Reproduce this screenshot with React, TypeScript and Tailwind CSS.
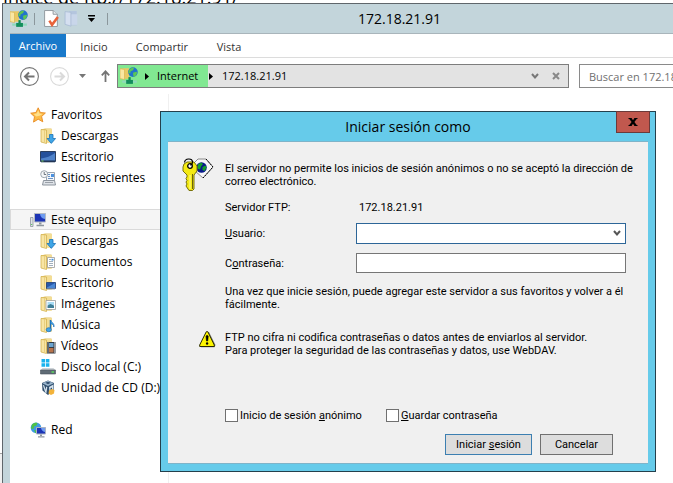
import type { ReactNode } from "react";

function Svg({ children, size = 16 }: { children: ReactNode; size?: number }) {
  return (
    <svg width={size} height={size} viewBox="0 0 16 16" className="shrink-0" aria-hidden="true">
      {children}
    </svg>
  );
}

function Folder({ children }: { children?: ReactNode }) {
  return (
    <Svg>
      <path d="M1 1.500 5 .5h6.500v14H5l-4-1z" fill="#e3c468" />
      <path d="M5.500 1H12v13.500H5.500z" fill="#f3dd94" />
      <path d="M1 1.500 6.500 2v13.500l-5.500-1.500z" fill="#f8e5a4" stroke="#d4b250" strokeWidth=".8" />
      <path d="M4.500 2v13" stroke="#e8cf80" />
      {children}
    </Svg>
  );
}

function DownloadsIcon() {
  return (
    <Folder>
      <path d="M9.500 6.500h3.500v4h2.600L11.300 15.400 7 10.500h2.500z" fill="#3fa5e6" stroke="#1c74b8" strokeWidth=".8" />
    </Folder>
  );
}

function DocumentsIcon() {
  return (
    <Folder>
      <path d="M7.500 3.500h7v10h-7z" fill="#fff" stroke="#9a9a9a" strokeWidth=".8" />
      <path d="M9 5.500h2M9 7.500h4M9 9.500h4M9 11.500h4" stroke="#8a9cad" strokeWidth=".8" />
      <path d="M11.500 4.800h2v1.700h-2z" fill="#3c8ede" />
    </Folder>
  );
}

function FolderDesktopIcon() {
  return (
    <Folder>
      <path d="M6.500 7.500h9v6h-9z" fill="#2759ab" stroke="#1a3c78" strokeWidth=".8" />
      <path d="M7 12.500 15 8v5H7z" fill="#4a87d4" />
      <path d="M7 14h8" stroke="#98a8b8" />
    </Folder>
  );
}

function PicturesIcon() {
  return (
    <Folder>
      <path d="M6 4.500h9.500v9H6z" fill="#fff" stroke="#9a9a9a" strokeWidth=".8" />
      <path d="M7.500 6h6.500v3H7.500z" fill="#a9dcf5" />
      <path d="m7.500 12 0-2.500 3-1.500 3.500 1.500V12z" fill="#3f7f98" />
    </Folder>
  );
}

function MusicIcon() {
  return (
    <Folder>
      <path d="M10.500 3v9" stroke="#1b6fb8" strokeWidth="1.500" />
      <path d="M10.500 3c.8 2.500 4.500 3.500 3.300 7 0-2.300-1.500-3-3.300-3.500z" fill="#42a4e8" stroke="#1b6fb8" strokeWidth=".7" />
      <ellipse cx="8.800" cy="12.700" rx="2.600" ry="2" fill="#42a4e8" stroke="#1b6fb8" strokeWidth=".7" />
    </Folder>
  );
}

function VideosIcon() {
  return (
    <Folder>
      <path d="M7 4h8.500v11.500H7z" fill="#333b44" />
      <path d="M9 5h4.500v4H9z" fill="#6aa4d0" />
      <path d="M9 10h4.500v4.500H9z" fill="#b7734b" />
      <path d="M8 4.500V15M14.500 4.500V15" stroke="#f2f2f2" strokeDasharray="1 1" />
    </Folder>
  );
}

function StarIcon() {
  return (
    <Svg>
      <path d="m8.200.8 2.100 4.700 5.100.5-3.800 3.500 1.200 5.300-4.600-2.600-4.700 2.900 1-5.400L.7 6.200l5.200-.7z" fill="#fdbb46" stroke="#e88a22" strokeWidth=".9" />
      <path d="m8.200 3.300 1.300 3.200 3.200.4-3.200 1.800-3.300.8L3.800 7l2.900-.5z" fill="#ffe08b" />
    </Svg>
  );
}

function DesktopIcon() {
  return (
    <Svg>
      <path d="M.5 2.500h15v10H.5z" fill="#24509b" stroke="#2c3f5e" />
      <path d="M1 9.500C6 9 11 7 15 4v8H1z" fill="#4f82c9" />
      <path d="M1 12h14" stroke="#1b2d4a" />
      <path d="M1.500 12h2" stroke="#7bd35a" />
      <path d="M1 13.500h14" stroke="#b9c2cc" />
    </Svg>
  );
}

function RecentIcon() {
  return (
    <Svg>
      <path d="M6.500 2.500h8v8h-8z" fill="#f3f6fa" stroke="#9aa4b0" />
      <path d="M8 4.500h2M8 6.500h2M8 8.500h5" stroke="#6b93c4" />
      <path d="M11 4h3v3h-3z" fill="#4b91df" />
      <path d="m3.500 10.500 11 0 1 4.500h-13z" fill="#dfe3e8" stroke="#8d959e" />
      <path d="M5 12.500h8" stroke="#9aa0a8" />
      <circle cx="4.200" cy="4.200" r="3.500" fill="#f5f7f9" stroke="#9ea7b0" />
      <path d="M4.200 2v2.500h2" fill="none" stroke="#5c646e" strokeWidth=".9" />
    </Svg>
  );
}

function ComputerIcon() {
  return (
    <Svg>
      <path d="M.5 5.500h2.500v9H.5z" fill="#dfe3e7" stroke="#8e969e" strokeWidth=".8" />
      <path d="M1.200 12.500h1" stroke="#4bc24b" />
      <path d="M4.500 1.500h11v8.500h-11z" fill="#1c34b5" stroke="#b4bac4" />
      <path d="M10 2h5v5c-3-.5-4.500-2-5-5z" fill="#6f9cf0" />
      <path d="M9 10.500h2.500v2H9z" fill="#8f979f" />
      <path d="M6.500 13.500h7.500" stroke="#8f979f" strokeWidth="1.500" />
    </Svg>
  );
}

function DiskIcon() {
  return (
    <Svg>
      <path d="M1.500 0h3.500v3.500H1.500zM5.800 0h3.600v3.500H5.800zM1.500 4.300h3.500v3.500H1.500zM5.800 4.300h3.600v3.500H5.800z" fill="#19b3ee" />
      <path d="m2.500 9 11 0 2 2.500H.5z" fill="#cdd3d8" />
      <path d="M.5 11h15v4H.5z" fill="#5f6b75" stroke="#48525b" strokeWidth=".6" />
      <path d="M11.500 13h2.500" stroke="#5be05b" strokeWidth="1.400" />
    </Svg>
  );
}

function CdIcon() {
  return (
    <Svg>
      <path d="m8 .5 6 2.500-.5 7.500L8 15l-5.500-4.500L2 3z" fill="#31506f" />
      <path d="m8 .8 5.600 2.400L8 6 2.400 3.200z" fill="#9cb7cf" />
      <path d="m5.300 2.800 2.700-1 2.700 1L8 4.300z" fill="#2f4d6c" />
      <path d="m2.700 4.800 1.500.8 1.500 4.200.4-3.200 1.200.6-.9 6-1.200-.8zM9 7l4.500-2.500-.4 5L9.500 12z" fill="#d4e1ec" />
      <path d="m10.500 8.200 1.500-.8v2l-1.500.9z" fill="#31506f" />
      <path d="m9 10.500 3-1.500 2.500 1-.5 3.500-3 1.500-2.500-1.500z" fill="#f3b33a" />
    </Svg>
  );
}

function NetworkIcon() {
  return (
    <Svg>
      <circle cx="6" cy="5.800" r="5.300" fill="#3f9be3" />
      <path d="M2 2.500c2-2 4-2.200 5.500-1.500L6.500 3.500 4 4.500 3.500 7 1 6.500zM4 8l3 .5.500 2.200-2 .6z" fill="#4fc245" />
      <path d="M6.500 5.500h9v6.500h-9z" fill="#1c34b5" stroke="#aab3c2" />
      <path d="M11 6h4v4c-2.500-.5-3.500-2-4-4z" fill="#6f9cf0" />
      <path d="M10 12.500h2V14h-2zM8 14.300h6.500v1.200H8z" fill="#8f979f" />
    </Svg>
  );
}

function FtpIcon() {
  return (
    <Svg size={18}>
      <path d="M0 1.500 4 1h4v9.500H0z" fill="#e9c864" />
      <path d="m0 1.500 4 .7v9L0 10.300z" fill="#fae7a2" stroke="#d6b452" strokeWidth=".6" />
      <circle cx="11.500" cy="4.500" r="4.300" fill="#2273cc" />
      <path d="M8.200 2.500c1.500-1.800 3-1.900 4.300-1.600l-1 2-2 .8-.5 2-1.800-.7zM11.500 5l3-.8.8 1-1.600 3-1.700.4z" fill="#5cc653" />
      <path d="M8.500 9v3" stroke="#118a54" strokeWidth="2" />
      <path d="M2 13h13" stroke="#8fd9bb" strokeWidth="2" />
      <path d="M5.500 11.500h6v3.500h-6z" fill="#138e5c" />
    </Svg>
  );
}

function PropertiesIcon() {
  return (
    <Svg size={17}>
      <path d="M1.500.5h8L13.500 4v11.500h-12z" fill="#fff" stroke="#90979d" strokeWidth=".9" />
      <path d="M9.500.5V4h4" fill="#e7eaed" stroke="#90979d" strokeWidth=".9" />
      <path d="m6 10 2.500 4L14 6.500" fill="none" stroke="#e8623a" strokeWidth="2.400" />
    </Svg>
  );
}

function NewFolderIcon() {
  return (
    <Svg size={17}>
      <path d="M5 1h7v13.500H5z" fill="#b4c5de" />
      <path d="m1 1.500 5.500.7v13L1 13.500z" fill="#d5dff0" stroke="#a5b7d3" strokeWidth=".7" />
      <path d="M7 4h5.500v10H7z" fill="#c9d6ea" />
    </Svg>
  );
}

function KeyIcon() {
  return (
    <svg width="32" height="34" viewBox="0 0 32 34" aria-hidden="true">
      <path d="M12 5 16 1h8l7 8-10 11-8-7z" fill="#f8f8f8" stroke="#8a8a8a" />
      <path d="m24 1 7 8-10 11" fill="none" stroke="#000" strokeDasharray="2 1" />
      <circle cx="19.500" cy="9.500" r="5.300" fill="#0a1a8c" />
      <path d="M16 6.500 19 4.500l2 1.500-2 2.500-1 3-2.500-1zM20.500 9l3-1.500 1 2-2 3.500-2-1z" fill="#16a02c" />
      <path d="M2 6 1 9v4l4 4v2L4 20.500l1 2L4 24l1 2-1 2 3 4.500h3.500L12 31V17l3-4V8l-3-4H5z" fill="#f4ea12" stroke="#77700c" />
      <path d="M8 17v14" stroke="#fffb9a" />
      <path d="M10.500 16v15" stroke="#6b650a" />
      <circle cx="8" cy="8" r="2.300" fill="#fff" stroke="#000" strokeWidth="1.300" />
      <path d="M2.500 4.500C3 0 10 0 10.500 3.500c0 2-1 3.500-2.500 3.500" fill="none" stroke="#000" strokeWidth="1.200" />
    </svg>
  );
}

function WarningIcon() {
  return (
    <svg width="17" height="17" viewBox="0 0 17 17" aria-label="Advertencia" role="img">
      <path d="M8 1h2l6.500 13-1 2.300H2z" fill="#7d7d7d" />
      <path d="M7.300.7h1.500L15.300 14v1.500H.7V14z" fill="#fdf500" stroke="#2a2a00" />
      <path d="M7 5.500c0-1.500 2.200-1.500 2.200 0L8.700 10H7.500z" fill="#000" stroke="#000" strokeWidth=".6" />
      <circle cx="8.100" cy="12.500" r="1.200" fill="#000" />
    </svg>
  );
}

function Chevron() {
  return (
    <svg width="8" height="7" viewBox="0 0 8 7" aria-hidden="true">
      <path d="m1 1 3 3.500L7 1" fill="none" stroke="currentColor" strokeWidth="2" />
    </svg>
  );
}

function Triangle() {
  return (
    <svg width="4" height="7" viewBox="0 0 4 7" className="shrink-0" aria-hidden="true">
      <path d="M0 0v7l4-3.500z" fill="#000" />
    </svg>
  );
}

function Arrow({ d, color }: { d: string; color: string }) {
  return (
    <svg width="19" height="19" viewBox="0 0 19 19" className={color} aria-hidden="true">
      <circle cx="9.500" cy="9.500" r="8.900" fill="none" stroke="currentColor" strokeWidth="1.100" />
      <path d={d} fill="none" stroke="currentColor" strokeWidth="2" />
    </svg>
  );
}

const BACK = "M14.500 9.500H5.500M9 5.500l-4 4 4 4";

function NavItem({ icon, label, root, active }: { icon: ReactNode; label: string; root?: boolean; active?: boolean }) {
  return (
    <li
      className={`flex h-[21px] items-center gap-1 whitespace-nowrap ${root ? "pl-[19px]" : "pl-[29px]"} ${
        active ? "border border-r-0 border-[#dadada] bg-[#f5f5f5]" : "border border-transparent"
      }`}
    >
      {icon}
      <a href="#" className="px-px">{label}</a>
    </li>
  );
}

function Explorer() {
  return (
    <main className="flex grow flex-col border-t border-l border-[#5f666b] bg-[#c3d5db] pl-[7px]">
      <header className="flex h-[29px] items-center">
        <div className="flex w-[116px] shrink-0 items-center">
          <FtpIcon />
          <span className="ml-1.5 mr-2 h-3 w-px bg-[#8b979c]" />
          <PropertiesIcon />
          <span className="w-1" />
          <NewFolderIcon />
          <button aria-label="Personalizar" className="mr-3 ml-[7px]">
            <svg width="7" height="7" viewBox="0 0 7 7">
              <path d="M0 0h7v1.500H0zM0 3h7L3.500 7z" fill="#000" />
            </svg>
          </button>
          <span className="h-3 w-px bg-[#8b979c]" />
        </div>
        <h1 className="grow text-center text-[14px]">172.18.21.91</h1>
      </header>
      <div className="flex grow flex-col bg-white">
        <nav className="flex h-[25px] items-stretch border-y border-t-[#a9b5bb] border-b-[#dcdcdc] text-[11px] text-[#333]">
          <button className="w-14 bg-[#1979ca] pt-px text-white">Archivo</button>
          <button className="w-14 pt-1">Inicio</button>
          <button className="w-20 pt-1">Compartir</button>
          <button className="w-[54px] pt-1">Vista</button>
        </nav>
        <div className="flex items-center pt-[6px] pl-[10px]">
          <button aria-label="Atrás"><Arrow d={BACK} color="text-[#747474]" /></button>
          <button aria-label="Adelante" className="ml-[11px]"><Arrow d="M4.500 9.500h9M10 5.500l4 4-4 4" color="text-[#dadada]" /></button>
          <button aria-label="Recientes" className="ml-[10px]">
            <svg width="7" height="4" viewBox="0 0 7 4"><path d="M0 0h7L3.500 4z" fill="#777" /></svg>
          </button>
          <button aria-label="Subir" className="ml-[15px]">
            <svg width="9" height="12" viewBox="0 0 9 12"><path d="M4.500 12V1.500M.8 5.300l3.700-4 3.700 4" fill="none" stroke="#747474" strokeWidth="1.800" /></svg>
          </button>
          <div className="ml-[7px] flex h-6 grow items-center border border-[#7d7d7d] bg-[#e3e3e3] text-[12px]">
            <div className="flex h-full w-[90px] items-center gap-[7px] bg-[#81e892] pl-0.5">
              <FtpIcon />
              <Triangle />
              <span className="pl-px text-[11px]">Internet</span>
            </div>
            <span className="ml-px"><Triangle /></span>
            <span className="grow pl-[9px] text-[11px]">172.18.21.91</span>
            <button aria-label="Historial" className="text-[#777]"><Chevron /></button>
            <button aria-label="Detener" className="mr-2 ml-[13px]">
              <svg width="8" height="8" viewBox="0 0 8 8"><path d="m1 1 6 6m0-6L1 7" stroke="#888" strokeWidth="2" /></svg>
            </button>
          </div>
          <input
            aria-label="Buscar"
            placeholder="Buscar en 172.18.21.91"
            className="ml-2.5 h-6 w-[94px] shrink-0 border border-r-0 border-[#8a8a8a] bg-white pl-[9px] text-[11px] outline-none placeholder:text-[#707070]"
          />
        </div>
        <aside className="mt-1.5 w-[159px] grow overflow-hidden border-r border-[#f0f0f0] pt-[10px] text-[12px]">
          <ul>
            <NavItem root icon={<StarIcon />} label="Favoritos" />
            <NavItem icon={<DownloadsIcon />} label="Descargas" />
            <NavItem icon={<DesktopIcon />} label="Escritorio" />
            <NavItem icon={<RecentIcon />} label="Sitios recientes" />
          </ul>
          <ul className="mt-[21px]">
            <NavItem root active icon={<ComputerIcon />} label="Este equipo" />
            <NavItem icon={<DownloadsIcon />} label="Descargas" />
            <NavItem icon={<DocumentsIcon />} label="Documentos" />
            <NavItem icon={<FolderDesktopIcon />} label="Escritorio" />
            <NavItem icon={<PicturesIcon />} label="Imágenes" />
            <NavItem icon={<MusicIcon />} label="Música" />
            <NavItem icon={<VideosIcon />} label="Vídeos" />
            <NavItem icon={<DiskIcon />} label="Disco local (C:)" />
            <NavItem icon={<CdIcon />} label="Unidad de CD (D:) V" />
          </ul>
          <ul className="mt-[21px]">
            <NavItem root icon={<NetworkIcon />} label="Red" />
          </ul>
        </aside>
      </div>
    </main>
  );
}

function LoginDialog() {
  return (
    <form
      role="dialog"
      aria-labelledby="login-title"
      className="absolute top-[111px] left-[160px] w-[496px] border border-[#24404c] bg-[#66cbea] px-[7px] pb-[7px]"
    >
      <div className="relative flex h-[29px] items-center justify-center">
        <h2 id="login-title" className="text-[14px]">Iniciar sesión como</h2>
        <button
          type="button"
          aria-label="Cerrar"
          className="absolute -top-px -right-0.5 flex h-[22px] w-[34px] items-center justify-center border border-[#6b3a3a] bg-[#c1584e]"
        >
          <svg width="10" height="8" viewBox="0 0 10 8"><path d="m2 0 6 8m0-8L2 8" stroke="#000" strokeWidth="2.200" /><path d="M.5.500h3M6.500.500h3M.5 7.500h3M6.500 7.500h3" stroke="#000" /></svg>
        </button>
      </div>
      <div className="border-y border-[#7fb4c9] bg-[#f0f0f0] px-[14px] pt-4 pb-2 font-['Roboto','Open_Sans',sans-serif] text-[11px] leading-[13px]">
        <div className="grid grid-cols-[43px_1fr]">
          <KeyIcon />
          <p className="pt-1">
            El servidor no permite los inicios de sesión anónimos o no se aceptó la dirección de
            <br />
            correo electrónico.
          </p>
          <div className="col-start-2 mt-[9px] grid grid-cols-[131px_270px] items-center">
            <span>Servidor FTP:</span>
            <span className="pl-[3px]">172.18.21.91</span>
            <label htmlFor="user" className="mt-[9px]"><u>U</u>suario:</label>
            <div className="relative mt-[9px]">
              <select id="user" className="block h-[21px] w-full appearance-none border border-[#2d6698] bg-white px-1 outline-none" />
              <span className="pointer-events-none absolute top-[7px] right-[5px] text-[#555]"><Chevron /></span>
            </div>
            <label htmlFor="password" className="mt-[9px]">C<u>o</u>ntraseña:</label>
            <input id="password" type="password" className="mt-[9px] h-5 border border-[#767676] bg-white px-1 outline-none" />
          </div>
          <p className="col-start-2 mt-3">
            Una vez que inicie sesión, puede agregar este servidor a sus favoritos y volver a él
            <br />
            fácilmente.
          </p>
          <div className="mt-5 pl-[17px]"><WarningIcon /></div>
          <p className="mt-5">
            FTP no cifra ni codifica contraseñas o datos antes de enviarlos al servidor.
            <br />
            Para proteger la seguridad de las contraseñas y datos, use WebDAV.
          </p>
        </div>
        <div className="mt-[52px] grid grid-cols-[161px_1fr] pl-[43px]">
          <label className="flex items-center gap-0.5">
            <input type="checkbox" className="size-[13px] appearance-none border border-[#707070] bg-white" />
            <span>Inicio de sesión <u>a</u>nónimo</span>
          </label>
          <label className="flex items-center gap-0.5">
            <input type="checkbox" className="size-[13px] appearance-none border border-[#707070] bg-white" />
            <span><u>G</u>uardar contraseña</span>
          </label>
        </div>
        <div className="mt-3 mr-[21px] flex justify-end gap-2">
          <button type="submit" className="h-[21px] w-[87px] border border-[#3c7fb1] bg-[#dddddd]">Iniciar <u>s</u>esión</button>
          <button type="button" className="h-[21px] w-[73px] border border-[#707070] bg-[#dddddd]">Cancelar</button>
        </div>
      </div>
    </form>
  );
}

export default function App() {
  return (
    <div className="relative flex min-h-screen overflow-hidden bg-white font-['Open_Sans','Noto_Sans',sans-serif] text-black">
      <div className="flex w-0.5 shrink-0 flex-col">
        <div className="grow" />
        <div className="h-[30px] border-t border-[#a0a0a0] bg-[#f0f0f0]" />
      </div>
      <div className="flex min-w-0 grow flex-col">
        <div className="flex h-[3px] items-end overflow-hidden pl-px text-[18px] leading-[12px] whitespace-nowrap">
          Índice de ftp://172.18.21.91/
        </div>
        <Explorer />
      </div>
      <LoginDialog />
    </div>
  );
}
